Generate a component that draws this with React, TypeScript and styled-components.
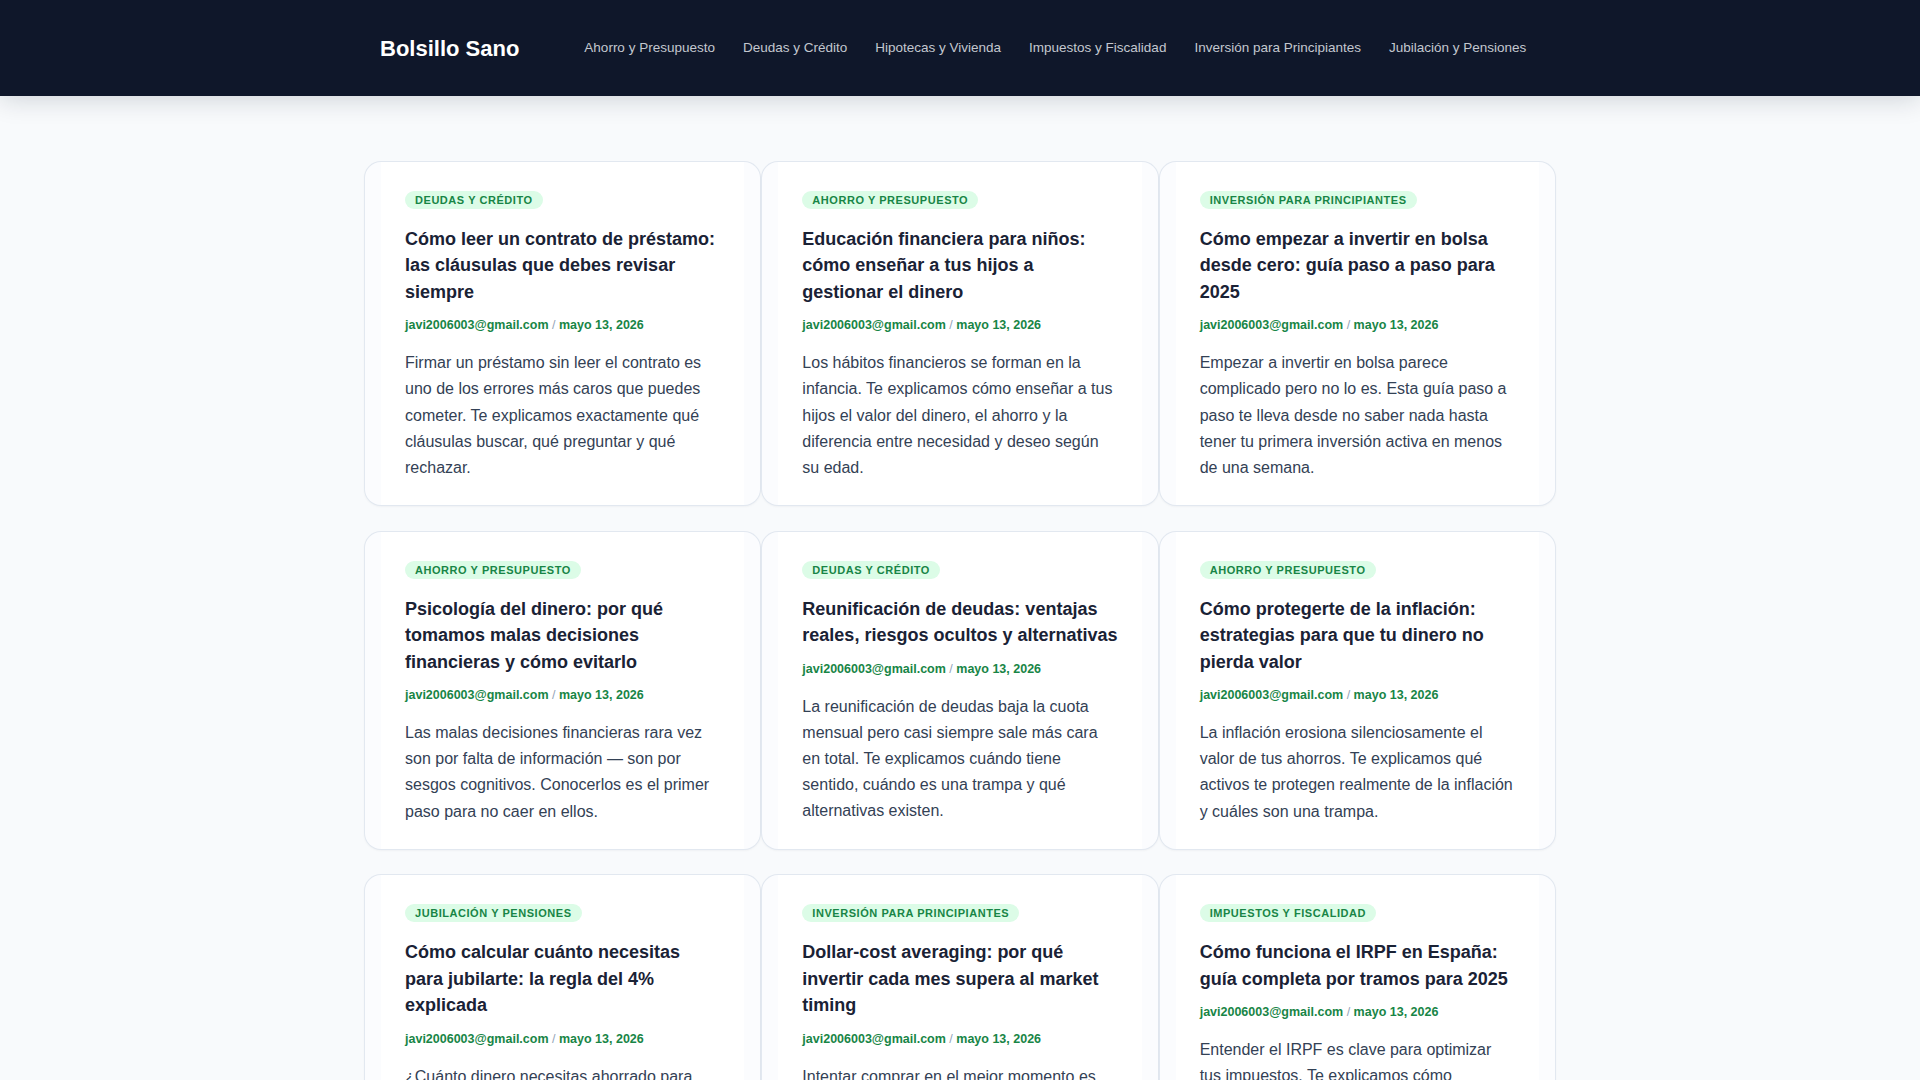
import React from 'react';
import styled, { createGlobalStyle } from 'styled-components';

const GlobalStyle = createGlobalStyle`
  html, body {
    margin: 0;
    padding: 0;
    background: #f8fafc;
    font-family: "Liberation Sans", Arial, sans-serif;
  }
`;

const Header = styled.header`
  position: relative;
  z-index: 2;
  height: 96px;
  background: #0f172a;
  box-shadow: 0 4px 24px rgba(15, 23, 42, 0.16);
`;

const HeaderInner = styled.div`
  width: 1190px;
  height: 100%;
  margin: 0 auto;
  padding: 0 15px;
  box-sizing: border-box;
  display: flex;
  align-items: center;
  gap: 65px;
`;

const Logo = styled.a`
  color: #fff;
  font-size: 22px;
  font-weight: 700;
  margin-top: 2px;
  text-decoration: none;
`;

const Nav = styled.nav`
  display: flex;
  gap: 28px;
  margin-top: -1px;
`;

const NavLink = styled.a`
  color: #c3c7cf;
  font-size: 13.5px;
  text-decoration: none;
`;

const Main = styled.main`
  width: 1190px;
  margin: 0 auto;
  padding: 66px 0 40px;
  display: grid;
  grid-template-columns: repeat(3, 1fr);
  column-gap: 2px;
  row-gap: 26.6px;
`;

const Card = styled.article`
  background: #fbfcfe;
  border-radius: 16px;
  box-shadow: 0 0 0 1px #e2e8f0, 0 1px 3px rgba(15, 23, 42, 0.08);
  padding: 0 16px;
  min-width: 0;
  overflow: hidden;
`;

const CardBody = styled.div`
  background: #fff;
  height: 100%;
  box-sizing: border-box;
  padding: 29px 24px 24px;
`;

const Tag = styled.span`
  display: inline-block;
  height: 18px;
  line-height: 18px;
  padding: 0 10px;
  border-radius: 999px;
  background: #dcfce7;
  color: #188546;
  font-size: 11px;
  font-weight: 700;
  letter-spacing: 0.55px;
  text-transform: uppercase;
  vertical-align: top;
`;

const Title = styled.h2`
  margin: 17px 0 0;
  color: #1a2235;
  font-size: 18px;
  font-weight: 700;
  line-height: 26.4px;
`;

const Meta = styled.div`
  margin-top: 11px;
  color: #94a3b8;
  font-size: 12.5px;
  line-height: 18px;
  font-weight: 400;
`;

const MetaStrong = styled.span`
  color: #188546;
  font-weight: 700;
`;

const Excerpt = styled.p`
  margin: 16px 0 0;
  color: #334155;
  font-size: 16px;
  line-height: 26.2px;
`;

const navItems = [
  'Ahorro y Presupuesto',
  'Deudas y Crédito',
  'Hipotecas y Vivienda',
  'Impuestos y Fiscalidad',
  'Inversión para Principiantes',
  'Jubilación y Pensiones',
];

const posts = [
  {
    tag: 'Deudas y Crédito',
    title: 'Cómo leer un contrato de préstamo: las cláusulas que debes revisar siempre',
    text: 'Firmar un préstamo sin leer el contrato es uno de los errores más caros que puedes cometer. Te explicamos exactamente qué cláusulas buscar, qué preguntar y qué rechazar.',
  },
  {
    tag: 'Ahorro y Presupuesto',
    title: 'Educación financiera para niños: cómo enseñar a tus hijos a gestionar el dinero',
    text: 'Los hábitos financieros se forman en la infancia. Te explicamos cómo enseñar a tus hijos el valor del dinero, el ahorro y la diferencia entre necesidad y deseo según su edad.',
  },
  {
    tag: 'Inversión para Principiantes',
    title: 'Cómo empezar a invertir en bolsa desde cero: guía paso a paso para 2025',
    text: 'Empezar a invertir en bolsa parece complicado pero no lo es. Esta guía paso a paso te lleva desde no saber nada hasta tener tu primera inversión activa en menos de una semana.',
  },
  {
    tag: 'Ahorro y Presupuesto',
    title: 'Psicología del dinero: por qué tomamos malas decisiones financieras y cómo evitarlo',
    text: 'Las malas decisiones financieras rara vez son por falta de información — son por sesgos cognitivos. Conocerlos es el primer paso para no caer en ellos.',
  },
  {
    tag: 'Deudas y Crédito',
    title: 'Reunificación de deudas: ventajas reales, riesgos ocultos y alternativas',
    text: 'La reunificación de deudas baja la cuota mensual pero casi siempre sale más cara en total. Te explicamos cuándo tiene sentido, cuándo es una trampa y qué alternativas existen.',
  },
  {
    tag: 'Ahorro y Presupuesto',
    title: 'Cómo protegerte de la inflación: estrategias para que tu dinero no pierda valor',
    text: 'La inflación erosiona silenciosamente el valor de tus ahorros. Te explicamos qué activos te protegen realmente de la inflación y cuáles son una trampa.',
  },
  {
    tag: 'Jubilación y Pensiones',
    title: 'Cómo calcular cuánto necesitas para jubilarte: la regla del 4% explicada',
    text: '¿Cuánto dinero necesitas ahorrado para',
  },
  {
    tag: 'Inversión para Principiantes',
    title: 'Dollar-cost averaging: por qué invertir cada mes supera al market timing',
    text: 'Intentar comprar en el mejor momento es',
  },
  {
    tag: 'Impuestos y Fiscalidad',
    title: 'Cómo funciona el IRPF en España: guía completa por tramos para 2025',
    text: 'Entender el IRPF es clave para optimizar tus impuestos. Te explicamos cómo',
  },
];

export default function App() {
  return (
    <>
      <GlobalStyle />
      <Header>
        <HeaderInner>
          <Logo href="#">Bolsillo Sano</Logo>
          <Nav>
            {navItems.map((item) => (
              <NavLink href="#" key={item}>
                {item}
              </NavLink>
            ))}
          </Nav>
        </HeaderInner>
      </Header>
      <Main>
        {posts.map((post) => (
          <Card key={post.title}>
            <CardBody>
              <Tag>{post.tag}</Tag>
              <Title>{post.title}</Title>
              <Meta>
                <MetaStrong>javi2006003@gmail.com</MetaStrong> / <MetaStrong>mayo 13, 2026</MetaStrong>
              </Meta>
              <Excerpt>{post.text}</Excerpt>
            </CardBody>
          </Card>
        ))}
      </Main>
    </>
  );
}
